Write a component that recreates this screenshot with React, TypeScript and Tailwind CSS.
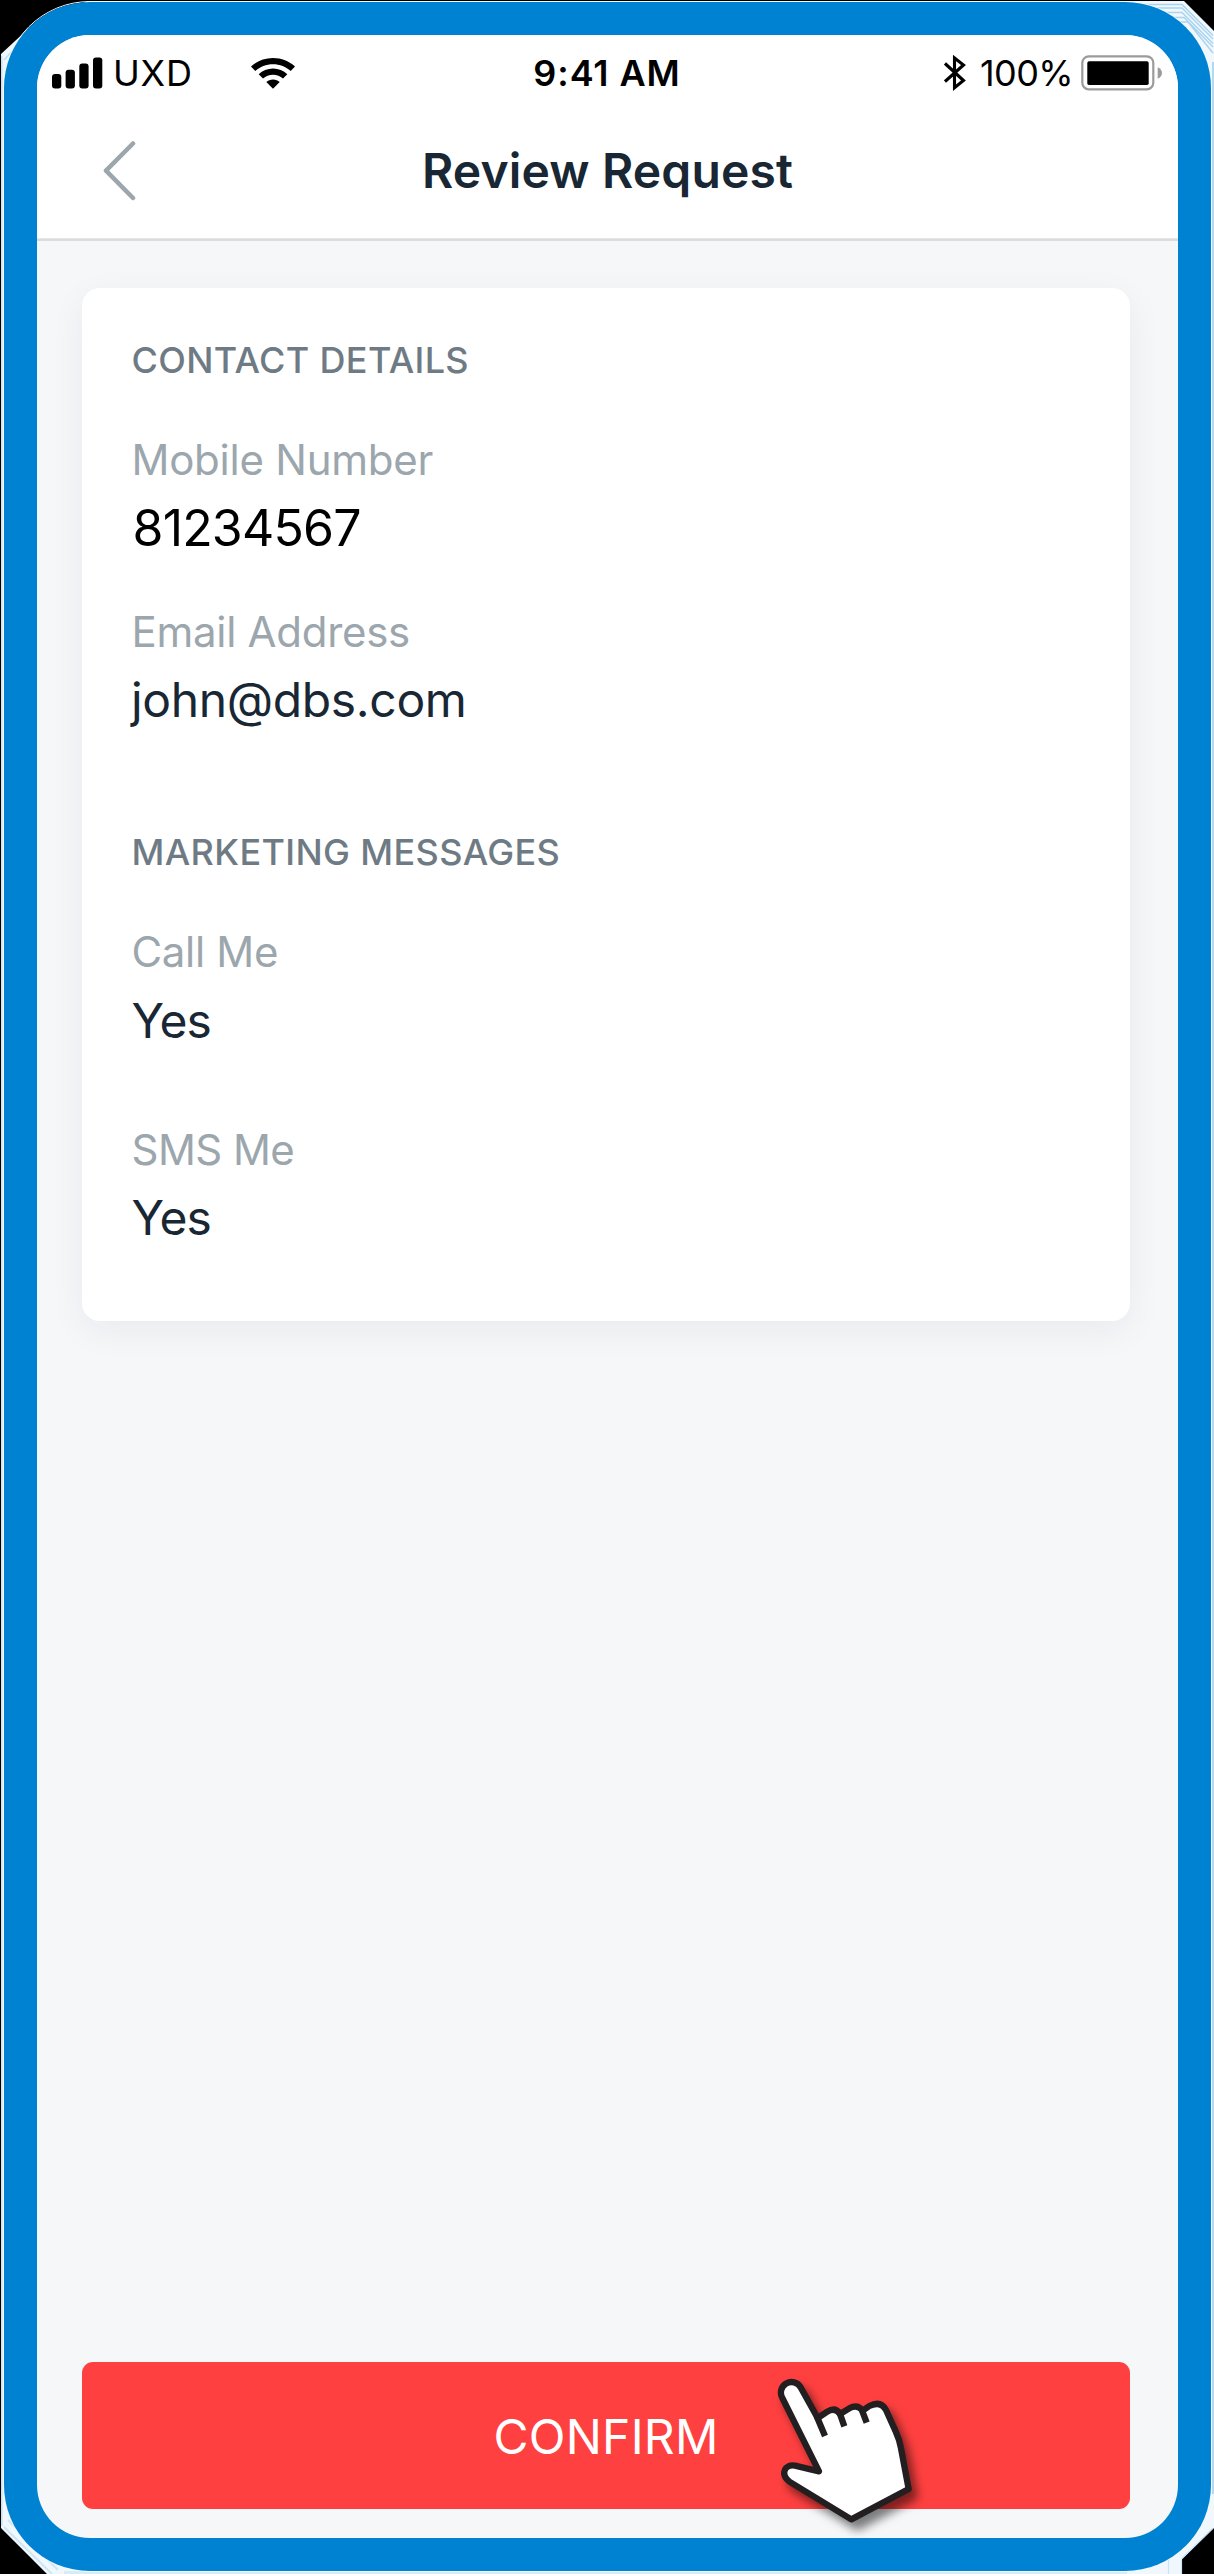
import React from 'react';

function Backdrop() {
  return (
    <svg className="absolute inset-0" width="1214" height="2574" viewBox="0 0 1214 2574" fill="none">
      <path
        d="M1 54L28 29L88 1H1184L1214 31V2528L1182 2559V2574H47L1 2528Z"
        fill="#f0f8fd"
      />
      <path d="M4 2527L52 2574M8 2520L58 2570" stroke="#cfe6f6" strokeWidth="2" />
      <path d="M1.8 56V2526" stroke="#c9e3f5" strokeWidth="1.6" />
      <path d="M4 60L26 36M9 60L24 43" stroke="#b9dbf2" strokeWidth="1.2" />
      <path
        d="M1130 4.500H1182L1213 35.500M1140 8H1182L1213 39M1150 12.500H1182L1213 43.500M1158 17.500H1184L1213 47M1166 22H1188L1213 53"
        stroke="#a9d3ef"
        strokeWidth="1.400"
      />
      <path d="M1213 62V2494" stroke="#b5d8f0" strokeWidth="2" />
      <path d="M1168.500 2558V2574M1181.500 2560V2574M1181.500 2559L1213 2528" stroke="#c9e3f5" strokeWidth="1.200" />
      <path d="M1127 2572.500H64" stroke="#d8ecf8" strokeWidth="3" />
      <rect x="3.500" y="1.500" width="1208" height="2570" rx="86.500" stroke="#f4fafe" />
    </svg>
  );
}

function SignalIcon() {
  return (
    <svg className="mr-[10.5px]" width="51" height="32" viewBox="0 0 51 32">
      <rect x="0" y="17" width="9.300" height="14.500" rx="3" />
      <rect x="13.600" y="12.700" width="9.300" height="18.800" rx="3" />
      <rect x="27.300" y="6.500" width="9.300" height="25" rx="3" />
      <rect x="41" y="0.500" width="9.300" height="31" rx="3" />
    </svg>
  );
}

function WifiIcon() {
  return (
    <svg className="ml-[58px]" width="44" height="31" viewBox="0 0 44 31">
      <path d="M22 0C30.500 0 38.200 3.200 44 8.500L39.700 12.900C35 8.700 28.800 6.200 22 6.200S9 8.700 4.300 12.900L0 8.500C5.800 3.200 13.500 0 22 0Z" />
      <path d="M22 10.600C27.500 10.600 32.500 12.700 36.300 16.200L32 20.500C29.300 18.100 25.800 16.700 22 16.700S14.700 18.100 12 20.500L7.700 16.200C11.500 12.700 16.500 10.600 22 10.600Z" />
      <path d="M22 21.600C24.700 21.600 27 22.500 28.700 24.100L22 30.800L15.300 24.100C17 22.500 19.300 21.600 22 21.600Z" />
    </svg>
  );
}

function BluetoothIcon() {
  return (
    <svg className="mr-[14px]" width="22" height="38" viewBox="0 0 22 38" fill="none">
      <path d="M1 9.500L19.500 26.500L10.500 33.800V4L19.500 11L1 27.500" stroke="black" strokeWidth="3.100" strokeMiterlimit="10" />
    </svg>
  );
}

function BatteryIcon() {
  return (
    <svg width="82" height="36" viewBox="0 0 82 36">
      <rect x="1.300" y="1.300" width="71" height="33" rx="6.500" fill="none" stroke="#9b9b9b" strokeWidth="2.200" />
      <rect x="6.300" y="6.200" width="61.400" height="23.800" rx="1.800" />
      <path d="M76.700 12.200C79.500 13.500 81 15.500 81 18S79.500 22.500 76.700 23.800Z" fill="#9b9b9b" />
    </svg>
  );
}

function StatusBar() {
  return (
    <div className="grid h-11 grid-cols-[1fr_auto_1fr] items-center text-[36px] leading-[44px] text-black">
      <div className="flex items-center pl-[14.5px]">
        <SignalIcon />
        <span className="tracking-[0.8px]">UXD</span>
        <WifiIcon />
      </div>
      <div className="pr-px font-semibold tracking-[0.9px]">9:41 AM</div>
      <div className="flex items-center justify-end pr-[15px]">
        <BluetoothIcon />
        <span className="mr-[8px] tracking-[-0.6px]">100%</span>
        <BatteryIcon />
      </div>
    </div>
  );
}

function Header() {
  return (
    <header className="h-[203px] shrink-0 bg-white pt-4">
      <StatusBar />
      <div className="mt-[46px] grid grid-cols-[1fr_auto_1fr] items-center">
        <svg className="ml-[65px]" width="34" height="60" viewBox="0 0 34 60" fill="none">
          <path d="M31 2.500L4 29.700L31 57" stroke="#9ca6ad" strokeWidth="4.500" strokeLinecap="round" strokeLinejoin="round" />
        </svg>
        <h1 className="text-[48px] leading-[60px] font-semibold tracking-[0.14px] text-[#182733]">Review Request</h1>
      </div>
    </header>
  );
}

function Label({ children, className }: { children: React.ReactNode; className: string }) {
  return <div className={`pl-[0.5px] text-[42px] leading-[50px] text-[#9ca6ad] ${className}`}>{children}</div>;
}

function Value({ children, className }: { children: React.ReactNode; className: string }) {
  return <div className={`leading-[58px] ${className}`}>{children}</div>;
}

function SectionTitle({ children, className }: { children: React.ReactNode; className: string }) {
  return (
    <h2 className={`mb-[53px] pl-[0.5px] text-[36px] leading-[44px] font-medium text-[#6f7b84] ${className}`}>
      {children}
    </h2>
  );
}

function DetailsCard() {
  return (
    <section className="h-[1033px] w-[1048px] rounded-[18px] bg-white pt-[50px] pl-[49px] text-[#182733] shadow-[0_10px_36px_rgba(30,35,45,0.06)]">
      <SectionTitle className="tracking-[0.34px]">CONTACT DETAILS</SectionTitle>
      <Label className="tracking-[-0.25px]">Mobile Number</Label>
      <Value className="mt-[14px] pl-[1.5px] text-[50px] tracking-[-0.8px] text-black">81234567</Value>
      <Label className="mt-[50px] tracking-[-0.28px]">Email Address</Label>
      <Value className="mt-[14px] text-[48px] tracking-[-0.35px]">john@dbs.com</Value>
      <SectionTitle className="mt-[101px] tracking-[0.36px]">MARKETING MESSAGES</SectionTitle>
      <Label className="tracking-[-0.33px]">Call Me</Label>
      <Value className="mt-[15px] pl-[0.5px] text-[48px] tracking-[-0.9px]">Yes</Value>
      <Label className="mt-[75px] tracking-[-0.55px]">SMS Me</Label>
      <Value className="mt-[14px] pl-[0.5px] text-[48px] tracking-[-0.9px]">Yes</Value>
    </section>
  );
}

function HandPointer() {
  return (
    <svg
      className="pointer-events-none absolute top-[-22px] left-[658px] drop-shadow-[6px_8px_5px_rgba(0,0,0,0.5)]"
      width="220"
      height="200"
      viewBox="0 0 660 600"
      fill="none"
      stroke="#231f20"
      strokeWidth="19"
      strokeLinejoin="round"
    >
      <path
        d="M237 394L127 174A31.500 31.500 0 0 1 182 142L233 234L262 215Q286 200 300 222L328 205Q353 191 368 212L388 198Q422 181 438 210L467 274Q479 300 483 325L506 447L334 538L148 425C120 402 134 372 165 377Z"
        fill="white"
      />
      <path d="M230 229L255 288M298 216L313 259M364 206L380 248" />
    </svg>
  );
}

export default function App() {
  return (
    <div className="relative h-[2574px] w-[1214px] overflow-hidden bg-black pt-[2px] pl-[4px] font-['Inter',sans-serif]">
      <Backdrop />
      <div className="relative h-[2569px] w-[1207px] rounded-[86px] bg-[#0082d3] p-[33px]">
        <main className="flex h-full flex-col overflow-hidden rounded-[53px] bg-[#f5f7f9]">
          <Header />
          <div className="h-[3px] shrink-0 border-t border-[#e5e6e7] bg-[#dadddf]" />
          <div className="flex flex-1 flex-col justify-between pt-[47px] pb-[29px] pl-[45px]">
            <DetailsCard />
            <div className="relative w-[1048px]">
              <button className="block h-[147px] w-full rounded-[11px] bg-[#ff4040] pt-[3px] text-[48px] tracking-[0.25px] text-white">
                CONFIRM
              </button>
              <HandPointer />
            </div>
          </div>
        </main>
      </div>
    </div>
  );
}
